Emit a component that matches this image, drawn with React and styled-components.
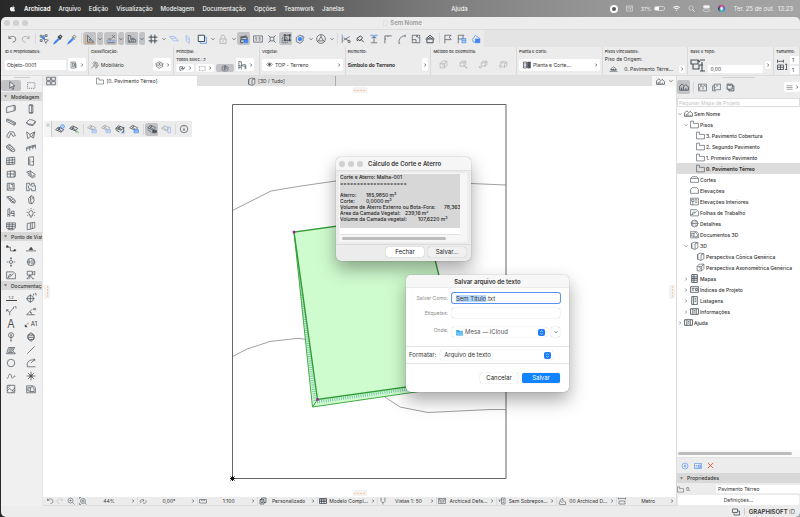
import React, { useEffect, useRef } from 'react';
import styled, { createGlobalStyle } from 'styled-components';
import { FaApple, FaWifi } from 'react-icons/fa';

const GlobalStyle = createGlobalStyle`
    * {
        box-sizing: border-box;
    }
    body {
        margin: 0;
        font-family: Inter, "Liberation Sans", sans-serif;
        font-size: 5px;
        line-height: 6px;
        color: #333;
        overflow: hidden;
    }
    button, input, select, textarea {
        font: inherit;
        color: inherit;
        margin: 0;
        padding: 0;
        border: 0;
        outline: none;
        background: none;
    }
    ul {
        list-style: none;
        margin: 0;
        padding: 0;
    }
`;

const BLUE = '#3f84f0';

const icons = {
    undo: <path d="M3 3v4h4M3 7c2-4 10-5 11 1 0 3-2 5-5 5" />,
    redo: <path d="M13 3v4H9M13 7C11 3 3 2 2 8c0 3 2 5 5 5" />,
    pick: <><path d="M2 2h3v3H2zM10 1h3v3h-3zM2 9h3v3H2z" /><path d="M4 4l5 5M6 3h4" /><circle cx="7" cy="6" r="2" fill={ BLUE } stroke={ BLUE } /><path d="M8 8l7 2-3 2-1 3z" fill="#fff" /></>,
    dropper: <><path d="M9 4l3 3 2-3-2-2zM8 5l4 4" strokeWidth="2" /><path d="M9 7l-6 6-1 2 2-1 6-6" stroke={ BLUE } strokeWidth="2" /></>,
    syringe: <><path d="M9 4l3 3 2-3-2-2zM8 5l4 4" /><path d="M9 7l-6 6-1 2 2-1 6-6" stroke={ BLUE } strokeWidth="2" /></>,
    triangle: <><path d="M4 2v11h10zM7 8v2h2z" /><path d="M1 1v14h14" stroke="#e08a4a" /></>,
    snap: <><path d="M1 11h14" stroke={ BLUE } strokeDasharray="3 1" /><path d="M3 8h6M10 6l4-4M10 2l4 4M2 14h12" /></>,
    ruler: <path d="M2 2v11h12V9H6V3zM4 10v3M7 10v3M10 10v3M7 7h5" />,
    grid: <path d="M5 1v14M11 1v14M1 5h14M1 11h14" strokeWidth="1.6" />,
    plane: <path d="M1 4h8l6 7H7zM4 7h8" stroke="#8fb3ee" />,
    planeV: <path d="M5 2l5 4v9l-5-4zM5 6l5 4" stroke="#8fb3ee" />,
    frame: <><path d="M5 5h10v10H5z" stroke={ BLUE } /><path d="M2 2h10v10H2z" fill="#eef3fb" strokeWidth="1.6" /></>,
    lock: <path d="M3 8h10v7H3zM5 8V4c0-3 6-3 6 0v4M8 10v3" stroke="#a5a5a5" />,
    trace: <><path d="M2 13l2-8 8-2M2 5h11v4H4M2 14h5" strokeWidth="1.6" /><path d="M8 9h6v5H8z" fill={ BLUE } stroke={ BLUE } /></>,
    dims: <path d="M1 3h14v10H1zM5 5v6M4 6h1M11 5v6M10 6h1M8 6v1M8 9v1" />,
    cross: <path d="M5 5h6v6H5zM2 2l3 3M14 2l-3 3M2 14l3-3M14 14l-3-3" />,
    group: <><path d="M2 6h8v8H2z" strokeDasharray="2 1" /><path d="M6 2h8v8H6zM5 1h2v2H5zM13 1h2v2h-2zM13 9h2v2h-2zM5 9h2v2H5z" strokeWidth="1.5" /></>,
    cube: <><path d="M2 6l5-4 6 2v7l-5 4-6-3z" /><circle cx="8" cy="8" r="3" fill={ BLUE } stroke={ BLUE } /><path d="M11 2l4 4" stroke={ BLUE } /></>,
    orbit: <><circle cx="8" cy="8" r="7" /><path d="M8 4l4 7H4zM8 1v3M2 12l2-1M14 12l-2-1" /></>,
    trim: <><path d="M2 6v8M14 4L4 10M4 6l10 6" /><path d="M2 1v5" stroke={ BLUE } /><circle cx="13" cy="12" r="2" /></>,
    wand: <path d="M3 7l6-4 3 3-4 5zM9 8l5 5M2 9l3 2" strokeWidth="1.6" />,
    adjust: <><path d="M2 2h12M4 5h8" stroke={ BLUE } /><path d="M8 4v9M5 7l3-3 3 3M3 14h10" /></>,
    corner: <path d="M3 15V3h11M3 8h2M8 3v2" />,
    fillet: <path d="M3 15C3 8 6 3 13 3M3 15h2M13 1v4" />,
    resize: <path d="M2 2h12v12H2zM2 9h6v5M9 3l4 4M9 5v-2h2" />,
    house: <path d="M1 8l7-6 7 6M3 8h10v6H3zM5 8l3-3 3 3" strokeWidth="1.6" />,
    flag: <path d="M3 15V2h10l-3 3 3 4H3" />,
    flagBlue: <><path d="M2 15V2h9L9 5l2 3H2" /><path d="M8 7h6v7H8zM8 10h6" stroke={ BLUE } fill="#bcd3fa" /></>,
    cloud: <><path d="M2 9l5-7 7 5-1 6H4z" stroke={ BLUE } /><path d="M7 8h7v6H7z" fill={ BLUE } stroke={ BLUE } /></>,
    props: <path d="M2 2h9v12H2zM5 4h3v7H5zM12 5v9M9 5v6" />,
    sofa: <path d="M8 14a6 6 0 1 0-5-9M6 10V6l4-2v4l2 1v2M1 14l5-4h5" />,
    layers: <path d="M1 7l7-4 7 4-7 4zM3 9l-1 2 6 4 6-4-1-2M8 5v4M6 7h4" />,
    plans: <path d="M2 4v8h4M2 4h7l-3 4h5l2-4M8 12l5-6M5 7l3 3" strokeWidth="1.5" />,
    marquee: <path d="M1 3h13v10H1z" strokeDasharray="2 1.5" />,
    chairBig: <path d="M3 15V2l4 1v6l6 1v5M3 9l4 1v5M7 9l4-2 3 1v6M3 12h3" />,
    compass: <path d="M2 6c3-3 9-3 12 0M2 12c3 3 9 3 12 0M2 6v6M14 6v6M8 3l3 6-5 3zM5 8h6" />,
    eye: <><path d="M1 8c3-5 11-5 14 0-3 5-11 5-14 0z" /><circle cx="8" cy="8" r="2.5" fill="#333" /></>,
    box: <path d="M2 6l4-4h8v8l-4 4H2zM2 6h8v8M10 6l4-4M5 8c3-1 4 1 2 4" />,
    boxPt: <path d="M2 5l3-3h7v6l-3 3H2zM2 5h7v6M9 5l3-3M9 11l5 3M13 12v2h2" />,
    boxSq: <path d="M4 5l3-3h7v6l-3 3H4zM4 5h7v6M11 5l3-3M1 11v3h3M1 14l3-3" />,
    boxRot: <path d="M3 4l4-2 7 2v6l-4 3-7-2zM3 4l7 2v7M10 6l4-2M1 9v3l3 3" />,
    section: <><path d="M1 2h6v12H1zM3 5h2M3 8h2M3 11h2" strokeWidth="1.5" /><path d="M9 2h6v12H9z" fill="#4a5560" /></>,
    floorLine: <path d="M1 13h14M4 11V8l4-3 4 3v3zM8 8v3M2 10h12" />,
    heights: <path d="M1 3h7v4H1zM3 7v5h6V8h4M10 3h5M12 5v9M10 14h5M8 3l2 2" />,
    size: <path d="M2 3h8M2 1v4M10 1v4M2 8h8v6H2zM6 8v6M12 7h3M12 14h3M14 7v7M2 11h8" />,
    cursor: <path d="M5 1v12l3-3 2 5 2-1-2-5h4z" fill="#f4f4f4" strokeWidth="1.4" />,
    wall: <path d="M1 5l12-3v9L1 14zM13 2l2 1v7l-2 1" />,
    column: <path d="M5 2h6v12H5zM5 2c1-1 5-1 6 0M5 14c1 1 5 1 6 0M9 3v11" />,
    beam: <path d="M1 4l2-1 12 6v3l-2 1L1 7zM1 4l12 6 2-1M13 10v3" />,
    slab: <path d="M1 8l5-4 5 1 4 2-4 5-8-1zM1 8v2l2 2 8 2 4-5V7" />,
    roof: <path d="M1 10l4-7 7 0 3 6-4 1-3-5-4 8z" />,
    shell: <path d="M1 3l5 4 8-4-2 10-5-3-4 4zM6 7l1 3M14 3l-5 8" />,
    stair: <path d="M1 5l4-3 9 8v3l-4 1-9-6zM3 6l4-3M5 8l4-3M7 10l4-3M9 12l4-3M1 5l9 8" />,
    railing: <path d="M1 13V7l14-4v6M6 12V6M11 10V4M1 9l14-4" />,
    curtain: <path d="M1 3l13-1v11L1 14zM5 3v11M10 2v11M1 7l13-1M1 11l13-1" />,
    door: <path d="M4 2l8-1v14l-8-1zM6 4v9M10 8v2" />,
    windowT: <path d="M2 4l11-1v10L2 13zM7 3v10M2 8h11M13 3l2 1v8l-2 1" />,
    skylight: <path d="M1 5l6-2 8 6-5 3zM4 5l6 5M3 9l7 5 5-2M7 3l1 4" />,
    opening: <path d="M2 2h11v11H2zM5 2v8h8M2 13l3-3M8 4h3v4" />,
    zone: <path d="M1 2h5v3h3V2h4v4h2v8H9v-3H5v3H1zM4 6v4M9 7h3" />,
    mesh: <path d="M1 3l6-1 8 7-1 4-5-1zM3 3l9 9M5 6l4-2M7 9l5-3M10 11l4-2" />,
    morph: <path d="M4 6l4-5 4 2 1 6-3 5-5-1zM8 1l-1 7 2 6M12 3l-3 4" />,
    chair: <path d="M3 14V2l3-1v7l7 1v5M6 8v6M3 10l3 1M9 9V5h4v4M9 12h4" />,
    lamp: <path d="M8 4a4 4 0 0 1 2 7v2H6v-2a4 4 0 0 1 2-7zM8 0v2M1 7h2M13 7h2M3 2l1 1M13 2l-1 1M2 12l2-1M14 12l-2-1M7 15h2" />,
    bimx: <path d="M1 3h14v8l-3 3H4l-3-3zM1 6h14M1 9h14M5 3v10M10 3v10M3 12h9" />,
    panelT: <path d="M2 4l5-1v10l-5 1zM7 3l7-1v9l-7 2M10 3v9" />,
    sectionL: <><path d="M2 5h5v6h7" /><path d="M0 5l2-3 2 3zM12 11l2-3 2 3z" fill="#333" /></>,
    elevation: <><path d="M0 11h16" /><path d="M5 9l3-4 3 4z" fill="#333" /></>,
    interior: <><circle cx="8" cy="8" r="2.5" /><path d="M8 1v3M8 12v3M1 8h3M12 8h3M7 3l1-2 1 2M7 13l1 2 1-2" /></>,
    detail: <><circle cx="8" cy="8" r="6" /><path d="M5 4v8M2 8h13M8 5h5M8 11h5" /></>,
    sheet: <path d="M1 3h11l3 3v8H1zM3 12l3-5 3 1-3 3zM9 8l3-2" />,
    camera: <path d="M2 2h8v6H2zM10 4l4-2v6l-4-2M6 8l-4 6M6 8l5 6M6 8v6M1 14h3M10 14h3" />,
    circle: <circle cx="8" cy="8" r="6" />,
    level: <><circle cx="7" cy="9" r="5" /><path d="M7 2v14M0 9h14M12 1v3M14 1h2v3" /></>,
    radial: <path d="M1 6l5 4v5M6 10l5-6h1M1 6v3M1 6h3M12 1v3M14 1h2v3" />,
    angle: <path d="M1 14h13M1 14l9-9M6 9l4 5M7 9l2 2M16 3c-2 4-4 4-4 2s2-2 4 2" />,
    label: <><path d="M2 14l5-8h4" /><path d="M0 10v6h6z" fill="#333" /></>,
    gridEl: <><circle cx="8" cy="5" r="4" /><path d="M8 3v12M7 5h2M8 13v2" /></>,
    change: <><circle cx="8" cy="8" r="5" /><path d="M3 5l5-4 5 4v6l-5 4-5-4zM5 6h6M4 9h8M7 12h3" /></>,
    hatch: <path d="M1 14l3-10h10l-3 5 4 5zM3 12h9M4 10h6M4 8h7M5 6h7" />,
    line: <path d="M2 14L14 2" />,
    arc: <path d="M15 14H2V9c1-4 4-6 9-6M8 8l6-6M14 5V2h-3" />,
    spline: <path d="M1 11c3 4 3-8 6-6s1 8 4 6 2-5 4-2" />,
    hotspot: <><path d="M8 1v14M1 8h14M3 3l10 10M13 3L3 13" /><circle cx="8" cy="8" r="2" /></>,
    figure: <path d="M2 2h12v12H2zM2 11l4-4 4 4 4-5M2 7l5-5M9 14l5-4" />,
    drawing: <path d="M1 3h11l3 3v8H1zM3 6h4v5H3zM6 7l4-3 3 4v4H6" />,
    folder: <path d="M1 14V2h5v4h9v8z" />,
    cubeTab: <path d="M3 4l5-2 6 1v9l-5 3-6-2zM3 4v9M9 5v9M9 5l5-2" />,
    tiles: <path d="M1 2h6v5H1zM9 2h6v5H9zM1 9h6v5H1zM9 9h6v5H9z" />,
    homes: <path d="M1 13V7l4-4 3 3M1 13h14V8l-4-4-4 4v5M4 13V9M11 13v-3" strokeWidth="1.3" />,
    viewMap: <path d="M1 2h14v12H1zM3 12V8l3-3 3 3v4M9 6l3-2 2 3M4 4h3" />,
    layout: <path d="M1 14V5h3M4 2h11v10H4zM4 9l3-2M7 5h4M1 14h6" />,
    publish: <path d="M2 2h9v9H2zM5 11v3h9V5h-3M4 4h5" strokeWidth="1.5" />,
    surf: <><path d="M1 7l5-4 8 3-4 4zM4 5l7 4M9 4L4 8M1 9l6 4M11 13h3V5" strokeWidth="1.4" /><path d="M10 14h5" stroke={ BLUE } /></>,
    surfDot: <><path d="M1 9l5-4 8 4-4 4zM4 6l7 6M8 6l-4 5" strokeWidth="1.4" /><circle cx="12" cy="4" r="3" stroke={ BLUE } fill="#bcd3fa" /></>,
    surfGreen: <><path d="M1 7l5-4 8 4-4 4zM4 5l7 5M8 4L4 9" strokeWidth="1.4" /><path d="M11 13c1-2 3-2 4 0M11 11v2h2M15 15v-2" stroke="#43b05c" /></>,
    surfBlue: <><path d="M1 6l5-4 8 4-4 4zM4 4l7 5M8 3L4 8" /><path d="M8 9h7v5H8zM8 11h7" stroke={ BLUE } fill="#bcd3fa" /></>,
    surfLock: <><path d="M1 6l5-4 8 4-4 4zM4 4l7 5M8 3L4 8M1 9l6 4" /><path d="M9 10h6v4H9z" fill="#4a545c" /></>,
    surfBox: <><path d="M1 7l5-4 6 3-3 5zM4 5l5 5" stroke="#999" /><path d="M11 5h4v9h-4z" stroke="#8fb3ee" /></>,
    info: <><circle cx="8" cy="8" r="6" /><path d="M8 7v4M8 4v1" strokeWidth="1.6" /></>,
    zoom: <><circle cx="7" cy="7" r="5" /><path d="M11 11l4 4M5 7h4M7 5v4" /></>,
    fit: <><circle cx="8" cy="8" r="5" /><path d="M12 12l3 3M1 4V1h3M8 5v6M5 8h6M1 12v3h3" /></>,
    rotate: <path d="M2 10a4 4 0 0 1 6-4l2 1M14 7a4 4 0 0 1-6 5M8 4l2 3-3 2M5 10l-3 1" />,
    scale: <path d="M1 5h14v7H1zM5 5v3M8 5v3M11 5v3" />,
    stack: <path d="M2 5h8v9H2zM5 5V2h9v9h-4M2 8h8M4 11h4" strokeWidth="1.5" />,
    model: <path d="M1 3h14v10H1zM1 6h14M1 9h14M5 3v10M10 3v10" strokeWidth="1.6" />,
    pen: <path d="M4 1v7c0 4 8 4 8 0V1M8 11v4M5 5h1M10 5h1" />,
    dimBox: <path d="M1 3h14v10H1zM4 6h8v4H4zM1 3l3 3M15 3l-3 3" />,
    rollers: <path d="M1 6h6M7 2h7v12H7zM3 6v4M9 5h3M9 8h3M9 11h3" />,
    reno: <path d="M2 14l3-8 4-4 1 6 5 2v5H6zM5 8l4 4" />,
    unit: <path d="M1 3h14M1 1v4M15 1v4M2 8h12v6H2z" />,
    cut: <path d="M1 6l3-3h8l3 3v7H1zM1 6h14" />,
    elev: <path d="M1 6l3-3h8l3 3v7H1z" />,
    table: <path d="M1 2h14v12H1zM3 4h4v4H3zM9 4h4M9 7h4M9 10h4M5 8v6" />,
    maps: <path d="M3 1h10v14H3zM3 5h10M3 8h10M3 11h10M7 1v14" strokeWidth="1.5" />,
    index: <path d="M1 3h14v10H1zM3 6h5M3 9h4M10 6h3v4h-3z" strokeWidth="1.4" />,
    list: <path d="M3 1h10v14H3zM6 1v14M8 4h3M8 7h3M8 10h3" strokeWidth="1.4" />,
    report: <path d="M1 3h14v10H1zM5 3v10M11 3v10M7 6h2M7 9h2" strokeWidth="1.5" />,
    plus: <><circle cx="8" cy="8" r="6" /><path d="M8 5v6M5 8h6" /></>,
    card: <><path d="M1 3h14v10H1zM3 7h4M3 10h4" /><path d="M9 6h4v5H9z" fill="#bcd3fa" /></>,
    close: <path d="M2 2l12 12M14 2L2 14" strokeWidth="2" />,
    windows: <path d="M1 2h10v7H1zM4 11v3h11V6h-3" strokeWidth="1.6" />,
    menu: <path d="M1 4h14M1 8h14M1 12h14" />,
    right: <path d="M5 2l6 6-6 6" strokeWidth="3" />,
    down: <path d="M2 5l6 6 6-6" strokeWidth="3" />,
    updown: <path d="M4 6l4-4 4 4M4 10l4 4 4-4" strokeWidth="2" />,
    fold: <path d="M3 4h10l-5 7z" fill="#777" stroke="none" />,
    calendar: <path d="M1 2h14v12H1zM1 5h14M4 8h2M8 8h4M4 11h2M8 11h4" />,
    search: <><circle cx="7" cy="7" r="5" /><path d="M11 11l4 4" strokeWidth="2" /></>,
    control: <><rect x="1" y="1" width="14" height="6" rx="3" fill="#f2f2f2" /><rect x="1" y="9" width="14" height="6" rx="3" /></>,
    macFolder: <><path d="M1 3h6l1 2h7v9H1z" fill="#3ba4dd" stroke="#3ba4dd" /><path d="M1 7h14v7H1z" fill="#68c3f2" stroke="none" /></>,
    doc: <path d="M4 1h6l3 3v11H4z" stroke="#d8cfc9" />,
};

const Icon = ({ name, size = 11, color }) => (
    <Svg $size={ size } $color={ color } viewBox="0 0 16 16" aria-hidden="true">{ icons[name] }</Svg>
);

const menus = ['Arquivo', 'Edição', 'Visualização', 'Modelagem', 'Documentação', 'Opções', 'Teamwork', 'Janelas'];

// 'v' is a drop-down arrow, '|' a separator, '*' marks a pressed button
const toolbar = [
    'undo', 'redo-', '|', 'pick', 'dropper', 'syringe', '|', 'triangle*', 'v*', 'snap*', 'v*', 'ruler*', 'v*',
    'grid', 'v', 'plane', 'planeV', 'frame', 'v', 'lock', 'v', 'trace*', 'dims', 'cross', 'group*', 'cube', 'v',
    'orbit', 'v', '|', 'trim', 'wand', 'adjust', 'corner', 'fillet', 'resize', 'house', '|', 'flag', 'flagBlue', 'cloud',
];

const palette = [
    'surfDot', 'surfGreen', '|', 'surfBlue-', 'surfBlue-', 'surf', 'surfBlue', '|', 'surfLock*', 'surfBox', '|', 'info',
];

const toolGroups = [
    ['Modelagem', ['wall', 'column', 'beam', 'slab', 'roof', 'shell', 'stair', 'railing', 'curtain', 'door', 'windowT', 'skylight', 'opening', 'zone', 'mesh', 'morph', 'chair', 'lamp', 'bimx', 'panelT']],
    ['Ponto de Vista', ['sectionL', 'elevation', 'interior', 'detail', 'sheet', 'camera']],
    ['Documentação', ['dimension', 'level', 'radial', 'angle', 'text', 'label', 'gridEl', 'change', 'hatch', 'line', 'circle', 'arc', 'spline', 'hotspot', 'figure', 'drawing']],
];

const tree = [
    [0, 'down', 'homes', 'Sem Nome'],
    [1, 'down', 'folder', 'Pisos'],
    [2, '', 'folder', '3. Pavimento Cobertura'],
    [2, '', 'folder', '2. Segundo Pavimento'],
    [2, '', 'folder', '1. Primeiro Pavimento'],
    [2, '', 'folder', '0. Pavimento Térreo', true],
    [1, '', 'cut', 'Cortes'],
    [1, '', 'elev', 'Elevações'],
    [1, '', 'table', 'Elevações Interiores'],
    [1, '', 'sheet', 'Folhas de Trabalho'],
    [1, '', 'detail', 'Detalhes'],
    [1, '', 'drawing', 'Documentos 3D'],
    [1, 'down', 'cubeTab', '3D'],
    [2, '', 'cubeTab', 'Perspectiva Cônica Genérica'],
    [2, '', 'box', 'Perspectiva Axonométrica Genérica'],
    [1, 'right', 'maps', 'Mapas'],
    [1, 'right', 'index', 'Índices de Projeto'],
    [1, 'right', 'list', 'Listagens'],
    [1, 'right', 'report', 'Informações'],
    [0, 'right', 'report', 'Ajuda'],
];

const statusItems = [
    ['fit', '44%'],
    ['rotate', '0,00°'],
    ['scale', '1:100'],
    ['stack', 'Personalizado'],
    ['model', 'Modelo Compl...'],
    ['pen', 'Vistas 1: 50'],
    ['dimBox', 'Archicad Defa...'],
    ['rollers', 'Sem Sobrepos...'],
    ['reno', '00 Archicad D...'],
    ['unit', 'Metro'],
];

const report = [
    'Corte e Aterro: Malha-001',
    '====================',
    '',
    'Aterro:\t185,9850 m³',
    'Corte:\t0,0000 m³',
    'Volume de Aterro Externo ou Bota-Fora:\t78,3630 m³',
    'Área da Camada Vegetal:\t239,16 m²',
    'Volume da Camada vegetal:\t107,6220 m³',
].join('\n');

const ToolRow = ({ items }) => items.map((item, i) => {
    if (item === '|') return <Separator key={ i } />;
    const name = item.replace(/[*-]/, '');
    const arrow = name === 'v';
    return (
        <ToolButton key={ i } type="button" aria-label={ name } $narrow={ arrow } $on={ item.endsWith('*') } $dim={ item.endsWith('-') }>
            <Icon name={ arrow ? 'down' : name } size={ arrow ? 4 : 10 } />
        </ToolButton>
    );
});

const MenuBar = () => (
    <Menu>
        <FaApple size={ 7 } />
        <MenuItem $bold>Archicad</MenuItem>
        { menus.map((m) => <MenuItem key={ m }>{ m }</MenuItem>) }
        <Notch />
        <MenuItem>Ajuda</MenuItem>
        <Tray>
            <Record />
            <Icon name="calendar" size={ 7 } color="#f2f2f2" />
            <Charge>37% <Battery /></Charge>
            <FaWifi size={ 7 } />
            <Icon name="search" size={ 7 } color="#f2f2f2" />
            <Icon name="control" size={ 7 } color="#f2f2f2" />
            <Siri />
            <span>Ter. 25 de out.&nbsp; 13:23</span>
        </Tray>
    </Menu>
);

const InfoBar = () => (
    <Info>
        <InfoCell>
            <Caption as="label" htmlFor="objId">ID e Propriedades:</Caption>
            <InfoRow>
                <Field id="objId" defaultValue="Objeto-0001" />
                <WhiteButton type="button" aria-label="Propriedades"><Icon name="props" size={ 8 } /><Icon name="right" size={ 4 } /></WhiteButton>
            </InfoRow>
        </InfoCell>
        <InfoCell>
            <Caption>Classificação:</Caption>
            <InfoRow>
                <Icon name="sofa" size={ 8 } />
                <Grow>Mobiliário</Grow>
                <WhiteButton type="button" aria-label="Camada"><Icon name="layers" size={ 9 } /><Icon name="right" size={ 4 } /></WhiteButton>
            </InfoRow>
        </InfoCell>
        <InfoCell>
            <Caption>Principal:</Caption>
            <InfoRow>
                <Stack>
                    <Caption>Todos Selec.: 2</Caption>
                    <MiniRow>
                        <MiniButton type="button" aria-label="Planta"><Icon name="plans" size={ 7 } /><Icon name="right" size={ 4 } /></MiniButton>
                        <MiniButton type="button" aria-label="Seleção"><Icon name="marquee" size={ 7 } /><Icon name="right" size={ 4 } /></MiniButton>
                        <MiniButton type="button" aria-label="Âncora" $on><Icon name="compass" size={ 8 } /></MiniButton>
                    </MiniRow>
                </Stack>
                <WhiteButton type="button" aria-label="Objeto"><Icon name="chairBig" size={ 10 } /><Icon name="right" size={ 4 } /></WhiteButton>
            </InfoRow>
        </InfoCell>
        <InfoCell>
            <Caption as="label" htmlFor="layer">Vegetal:</Caption>
            <InfoRow>
                <SelectBox>
                    <Icon name="eye" size={ 7 } />
                    <Select id="layer"><option>TOP - Terreno</option></Select>
                    <Icon name="right" size={ 4 } />
                </SelectBox>
            </InfoRow>
        </InfoCell>
        <InfoCell>
            <Caption>Elemento:</Caption>
            <InfoRow>
                <Grow $bold>Símbolo do Terreno</Grow>
                <WhiteButton type="button" aria-label="Escolher" $slim><Icon name="right" size={ 4 } /></WhiteButton>
            </InfoRow>
        </InfoCell>
        <InfoCell>
            <Caption>Método de Geometria:</Caption>
            <InfoRow $spread>
                { ['box', 'boxPt', 'boxSq', 'boxRot'].map((n) => <Icon key={ n } name={ n } size={ 9 } color="#aaa" />) }
            </InfoRow>
        </InfoCell>
        <InfoCell>
            <Caption as="label" htmlFor="plan">Planta e Corte:</Caption>
            <InfoRow>
                <SelectBox>
                    <Icon name="section" size={ 8 } />
                    <Select id="plan"><option>Planta e Corte...</option></Select>
                    <Icon name="right" size={ 4 } />
                </SelectBox>
            </InfoRow>
        </InfoCell>
        <InfoCell>
            <Caption>Pisos Vinculados:</Caption>
            <Linked>
                <span>Piso de Origem:</span>
                <LinkedRow>
                    <Icon name="floorLine" size={ 9 } />
                    <span>0. Pavimento Térre...</span>
                    <MiniButton type="button" aria-label="Piso" $slim><Icon name="right" size={ 4 } /></MiniButton>
                </LinkedRow>
            </Linked>
        </InfoCell>
        <InfoCell>
            <Caption as="label" htmlFor="base">Base e Topo:</Caption>
            <InfoRow>
                <Icon name="heights" size={ 16 } />
                <LowField id="base" defaultValue="0,00" />
                <MiniButton type="button" aria-label="Base" $slim><Icon name="right" size={ 4 } /></MiniButton>
            </InfoRow>
        </InfoCell>
        <InfoCell>
            <Caption>Tamanho:</Caption>
            <InfoRow>
                <Icon name="size" size={ 12 } />
                <Stack>
                    <SizeField aria-label="Largura" defaultValue="1" />
                    <SizeField aria-label="Altura" defaultValue="1" />
                </Stack>
            </InfoRow>
        </InfoCell>
    </Info>
);

const ToolIcon = ({ name }) => {
    if (name === 'text') return <Letter>A</Letter>;
    if (name === 'label') return <><Icon name="label" size={ 6 } /><small>A1</small></>;
    if (name === 'dimension') return <DimMark>1.2</DimMark>;
    return <Icon name={ name } size={ 10 } />;
};

const Toolbox = () => (
    <Tools>
        <Grip $width={ 16 } />
        <ToolGrid $gap>
            <Tool type="button" aria-label="Seta" $on><Icon name="cursor" size={ 9 } /></Tool>
            <Tool type="button" aria-label="Área"><Icon name="marquee" size={ 9 } /></Tool>
        </ToolGrid>
        { toolGroups.map(([title, tools]) => (
            <section key={ title }>
                <GroupTitle><Icon name="fold" size={ 5 } />{ title }</GroupTitle>
                <ToolGrid>
                    { tools.map((t) => <Tool key={ t } type="button" aria-label={ t }><ToolIcon name={ t } /></Tool>) }
                </ToolGrid>
            </section>
        )) }
    </Tools>
);

const SitePlan = () => (
    <Plan viewBox="43 86 633 411">
        <g fill="none" stroke="#888" strokeWidth="0.8">
            <path d="M232.5 210.5L271 191l30-5 35-5M471 183.500l35 1.500" />
            <path d="M232.500 356.500L247 349l23-7.500 28-3.200 8 1" />
            <path d="M382 395l18 12 28 5.500 62-3h16" />
        </g>
        <path d="M232.500 104.500h273.500v374h-273.500z" fill="none" stroke="#666" strokeWidth="1" />
        <path d="M294 232l18.500 175 110-16 40-5-38-172z" fill="#cffccf" />
        <g stroke="#59aaa0" strokeDasharray="0.800 1.400" fill="none" opacity="0.8">
            <path d="M296.500 250l5 45" strokeWidth="1.500" />
            <path d="M302 295l13 107" strokeWidth="3" />
            <path d="M317 402l92-13" strokeWidth="3" />
        </g>
        <path d="M294 232l18.500 175 110-16" fill="none" stroke="#43a843" strokeWidth="1" />
        <path d="M312.500 407l5-7.500" stroke="#43a843" strokeWidth="1" />
        <path d="M317.500 399.500L294 232l130-18 40 165z" fill="none" stroke="#2f9c35" strokeWidth="1.400" />
        <path d="M293 231h2v2h-2zM316.500 398.500h2v2h-2z" fill="#a3179b" stroke="#a3179b" strokeWidth="0.500" />
        <path d="M230.500 476.500l4 4M234.500 476.500l-4 4M230 478.500h5M232.500 476v5" stroke="#111" strokeWidth="1" />
    </Plan>
);

const Navigator = () => (
    <Panel>
        <PanelTop>
            <Grip $width={ 32 } />
            <PanelTools>
                <NavButton type="button" aria-label="Mapa de Projeto" $on><Icon name="homes" size={ 10 } /></NavButton>
                <Separator />
                <NavButton type="button" aria-label="Mapa de Vistas"><Icon name="viewMap" size={ 9 } /></NavButton>
                <NavButton type="button" aria-label="Livro de Layouts"><Icon name="layout" size={ 9 } /></NavButton>
                <NavButton type="button" aria-label="Publicador"><Icon name="publish" size={ 9 } /></NavButton>
                <PanelMenu type="button" aria-label="Opções"><Icon name="menu" size={ 7 } /><Icon name="right" size={ 4 } /></PanelMenu>
            </PanelTools>
        </PanelTop>
        <SearchField aria-label="Pesquisar" placeholder="Pequisar Mapa de Projeto" />
        <Tree>
            { tree.map(([depth, arrow, icon, name, active]) => (
                <TreeRow key={ name } $depth={ depth } $active={ active }>
                    <Arrow>{ arrow && <Icon name={ arrow } size={ 4 } color="#777" /> }</Arrow>
                    <Icon name={ icon } size={ 9 } />
                    { name }
                </TreeRow>
            )) }
        </Tree>
        <Track><Thumb /></Track>
        <Actions>
            <NavButton type="button" aria-label="Novo"><Icon name="plus" size={ 8 } color={ BLUE } /></NavButton>
            <NavButton type="button" aria-label="Configurar"><Icon name="card" size={ 8 } color={ BLUE } /></NavButton>
            <NavButton type="button" aria-label="Apagar"><Icon name="close" size={ 7 } color="#e8492c" /></NavButton>
        </Actions>
        <PropTitle><Icon name="fold" size={ 5 } />Propriedades</PropTitle>
        <PropRow>
            <Icon name="folder" size={ 7 } />
            <PropLabel htmlFor="floor">0.</PropLabel>
            <PropField id="floor" defaultValue="Pavimento Térreo" />
        </PropRow>
        <Settings type="button">Definições...</Settings>
    </Panel>
);

const ReportDialog = () => (
    <ReportWindow role="dialog" aria-label="Cálculo de Corte e Aterro">
        <DialogTitle>
            <Lights><i /><i /><i /></Lights>
            <span>Cálculo de Corte e Aterro</span>
        </DialogTitle>
        <ReportBox>
            <ReportText aria-label="Relatório" readOnly wrap="off" defaultValue={ report } />
            <ReportTrack><Thumb /></ReportTrack>
        </ReportBox>
        <ReportActions>
            <DialogButton type="button">Fechar</DialogButton>
            <DialogButton type="button" $soft>Salvar...</DialogButton>
        </ReportActions>
    </ReportWindow>
);

const SaveDialog = () => {
    const nameRef = useRef(null);

    useEffect(() => {
        nameRef.current.focus({ preventScroll: true });
        nameRef.current.setSelectionRange(0, 10);
    }, []);

    return (
        <SaveWindow role="dialog" aria-label="Salvar arquivo de texto">
            <SaveTitle>Salvar arquivo de texto</SaveTitle>
            <SaveForm>
                <SaveLabel htmlFor="fileName">Salvar Como:</SaveLabel>
                <NameField id="fileName" ref={ nameRef } defaultValue="Sem Título.txt" />
                <SaveLabel htmlFor="tags">Etiquetas:</SaveLabel>
                <DialogField id="tags" />
                <SaveLabel htmlFor="where">Onde:</SaveLabel>
                <WhereRow>
                    <DialogSelect>
                        <Icon name="macFolder" size={ 7 } />
                        <Select id="where" $size={ 6 } $muted><option>Mesa — iCloud</option></Select>
                        <Stepper><Icon name="updown" size={ 5 } color="#fff" /></Stepper>
                    </DialogSelect>
                    <Expand type="button" aria-label="Expandir"><Icon name="down" size={ 4 } /></Expand>
                </WhereRow>
            </SaveForm>
            <FormatRow>
                <label htmlFor="format">Formatar:</label>
                <DialogSelect>
                    <Select id="format" $size={ 6 }><option>Arquivo de texto</option></Select>
                    <Stepper><Icon name="updown" size={ 5 } color="#fff" /></Stepper>
                </DialogSelect>
            </FormatRow>
            <SaveActions>
                <DialogButton type="button">Cancelar</DialogButton>
                <DialogButton type="submit" $primary>Salvar</DialogButton>
            </SaveActions>
        </SaveWindow>
    );
};

const App = () => (
    <Desktop>
        <GlobalStyle />
        <MenuBar />
        <Window>
            <TitleBar>
                <Lights><i /><i /><i /></Lights>
                <TitleText><Icon name="doc" size={ 6 } />Sem Nome</TitleText>
            </TitleBar>
            <Toolbar><ToolStrip><ToolRow items={ toolbar } /></ToolStrip></Toolbar>
            <InfoBar />
            <Body>
                <Toolbox />
                <Center>
                    <Tabs>
                        <TabTiles type="button" aria-label="Abas"><Icon name="tiles" size={ 10 } /></TabTiles>
                        <Tab type="button" $active><Icon name="folder" size={ 8 } />[0. Pavimento Térreo]</Tab>
                        <Tab type="button"><Icon name="cubeTab" size={ 9 } />[3D / Tudo]</Tab>
                        <TabView type="button" aria-label="Vista"><Icon name="homes" size={ 9 } /><Icon name="down" size={ 4 } /></TabView>
                    </Tabs>
                    <Canvas>
                        <SitePlan />
                        <Palette>
                            <PaletteGrip><i /></PaletteGrip>
                            <ToolRow items={ palette } />
                        </Palette>
                        <Handle $side="top" />
                        <Handle $side="bottom" />
                        <Handle $side="left" />
                        <Handle $side="right" />
                    </Canvas>
                    <Status>
                        <Zooms>
                            <Icon name="undo" size={ 8 } />
                            <Icon name="redo" size={ 8 } color="#bbb" />
                            <Icon name="zoom" size={ 8 } />
                        </Zooms>
                        { statusItems.map(([icon, text]) => (
                            <StatusItem key={ text } type="button">
                                <Icon name={ icon } size={ 8 } />
                                <span>{ text }</span>
                                <Icon name="right" size={ 4 } />
                            </StatusItem>
                        )) }
                    </Status>
                </Center>
                <Navigator />
            </Body>
            <Footer>
                <Icon name="windows" size={ 8 } />
                <FooterLine />
                <Brand>GRAPHISOFT <b>ID</b></Brand>
            </Footer>
        </Window>
        <ReportDialog />
        <SaveDialog />
    </Desktop>
);

export default App;


const Svg = styled.svg`
    flex: none;
    display: block;
    width: ${({ $size }) => $size}px;
    height: ${({ $size }) => $size}px;
    fill: none;
    stroke: ${({ $color }) => $color || "#444e57"};
    stroke-width: 1.1;
    overflow: visible;
`;
const Desktop = styled.div`
    position: relative;
    min-height: 100vh;
    display: flex;
    flex-direction: column;
    background: linear-gradient(90deg, #292929 0%, #4b4b4b 30%, #7d7d7d 55%, #969696 75%, #a4a4a4 100%);
`;
const Menu = styled.header`
    height: 17px;
    display: flex;
    align-items: center;
    gap: 8px;
    padding: 0 7px 0 9px;
    font-size: 6px;
    color: #f2f2f2;
`;
const MenuItem = styled.span`
    font-weight: ${({ $bold }) => $bold ? 700 : 500};
`;
const Notch = styled.span`
    width: 91px;
`;
const Tray = styled.div`
    margin-left: auto;
    display: flex;
    align-items: center;
    gap: 8px;
`;
const Record = styled.span`
    width: 8px;
    height: 8px;
    border-radius: 50%;
    border: 2px solid #fff;
    background: #555;
`;
const Charge = styled.span`
    display: flex;
    align-items: center;
    gap: 3px;
    font-size: 5px;
`;
const Battery = styled.span`
    width: 11px;
    height: 5px;
    border: 1px solid #ccc;
    border-radius: 2px;
    background: linear-gradient(90deg, #fff 40%, transparent 40%);
`;
const Siri = styled.span`
    width: 7px;
    height: 7px;
    border-radius: 50%;
    background: radial-gradient(#fff 10%, transparent 50%), conic-gradient(#e0457b, #2f6fe0, #35c4c0, #3a2a60, #e0457b);
`;
const Window = styled.div`
    flex: 1;
    margin-left: 1px;
    display: flex;
    flex-direction: column;
    background: #ececec;
    border-radius: 5px;
    overflow: hidden;
`;
const Lights = styled.span`
    display: flex;
    gap: 3px;

    i {
        width: 6px;
        height: 6px;
        border-radius: 50%;
        background: #d0d0d0;
    }
`;
const TitleBar = styled.div`
    height: 13px;
    display: grid;
    grid-template-columns: 1fr auto 1fr;
    align-items: center;
    padding-left: 3px;
    border-bottom: 1px solid #dcdcdc;
`;
const TitleText = styled.h1`
    margin: 0;
    display: flex;
    align-items: center;
    gap: 2px;
    font-size: 6px;
    font-weight: 600;
    color: #9a9a9a;
`;
const Toolbar = styled.div`
    height: 17px;
    display: flex;
    background: #e4e4e4;
`;
const ToolStrip = styled.div`
    display: flex;
    align-items: center;
    padding: 0 1px 0 4px;
    background: #ebebeb;
`;
const ToolButton = styled.button`
    flex: none;
    width: ${({ $narrow }) => $narrow ? 7 : 14}px;
    height: 13px;
    display: flex;
    align-items: center;
    justify-content: center;
    border-radius: 2px;
    background: ${({ $on }) => $on ? "#c3c3c6" : "none"};
    background-clip: padding-box;
    border-right: ${({ $on }) => $on ? 1 : 0}px solid transparent;
    opacity: ${({ $dim }) => $dim ? 0.5 : 1};
`;
const Separator = styled.span`
    flex: none;
    width: 4px;
    height: 11px;
    border-left: 1px solid #d8d8d8;
    margin-right: -2px;
    margin-left: 2px;
`;
const Info = styled.div`
    height: 29px;
    display: grid;
    grid-template-columns: repeat(9, minmax(0, 86fr)) minmax(0, 26fr);
    padding-left: 2px;
    border-bottom: 1px solid #dedede;
`;
const InfoCell = styled.div`
    display: flex;
    flex-direction: column;
    padding: 2px 2px 0;
    border-right: 1px solid #d9d9d9;
    overflow: hidden;
`;
const Caption = styled.span`
    font-size: 4px;
    line-height: 5px;
    font-weight: 500;
    white-space: nowrap;
`;
const InfoRow = styled.div`
    flex: 1;
    display: flex;
    align-items: center;
    justify-content: ${({ $spread }) => $spread ? "space-between" : "flex-start"};
    gap: 2px;
    padding: ${({ $spread }) => $spread ? "0 6px" : 0};
`;
const Field = styled.input`
    flex: 1;
    min-width: 0;
    height: 10px;
    padding: 0 2px;
    border-radius: 1px;
    background: #fff;
`;
const LowField = styled(Field)`
    height: 8px;
    align-self: flex-end;
    margin-bottom: 2px;
`;
const SizeField = styled.input`
    width: 20px;
    height: 8px;
    padding: 0 2px;
    background: #fff;
`;
const WhiteButton = styled.button`
    flex: none;
    width: ${({ $slim }) => $slim ? 6 : 18}px;
    height: 13px;
    display: flex;
    align-items: center;
    justify-content: center;
    gap: 2px;
    border-radius: 2px;
    background: #fff;
`;
const Grow = styled.span`
    flex: 1;
    font-weight: ${({ $bold }) => $bold ? 700 : 400};
    white-space: nowrap;
`;
const Stack = styled.div`
    display: flex;
    flex-direction: column;
    gap: 2px;
`;
const MiniRow = styled.div`
    display: flex;
    gap: 2px;
`;
const MiniButton = styled.button`
    flex: none;
    width: ${({ $slim }) => $slim ? 6 : 18}px;
    height: 8px;
    display: flex;
    align-items: center;
    justify-content: center;
    gap: 2px;
    border-radius: 2px;
    background: ${({ $on }) => $on ? "#c3c3c6" : "#fff"};
`;
const SelectBox = styled.div`
    flex: 1;
    min-width: 0;
    height: 12px;
    display: flex;
    align-items: center;
    gap: 2px;
    padding: 0 2px 0 4px;
    border-radius: 2px;
    background: #fff;
`;
const Select = styled.select`
    flex: 1;
    min-width: 0;
    appearance: none;
    font-size: ${({ $size }) => $size || 5}px;
    line-height: 8px;
    color: ${({ $muted }) => $muted ? "#555" : "#333"};
`;
const Linked = styled.div`
    flex: 1;
    display: flex;
    flex-direction: column;
    justify-content: space-evenly;
`;
const LinkedRow = styled.div`
    display: flex;
    align-items: center;
    justify-content: space-between;
    padding-left: 4px;
    white-space: nowrap;
`;
const Body = styled.div`
    flex: 1;
    display: grid;
    grid-template-columns: 42px minmax(0, 1fr) 124px;
`;
const Tools = styled.aside`
    background: #f0f0f0;
    border-right: 1px solid #e4e4e4;
    overflow: hidden;
`;
const Grip = styled.div`
    width: ${({ $width }) => $width}px;
    height: 1px;
    margin: 1px auto 2px;
    background: #cfcfcf;
`;
const ToolGrid = styled.div`
    display: grid;
    grid-template-columns: 20px 20px;
    grid-auto-rows: ${({ $gap }) => $gap ? 11 : 13}px;
    margin-bottom: ${({ $gap }) => $gap ? 1 : 0}px;
`;
const Tool = styled.button`
    display: flex;
    align-items: center;
    justify-content: center;
    border-radius: 2px;
    background: ${({ $on }) => $on ? "#c3c3c6" : "none"};

    small {
        font-size: 6px;
    }
`;
const Letter = styled.span`
    font-size: 11px;
    font-weight: 300;
`;
const DimMark = styled.span`
    width: 11px;
    font-size: 4px;
    line-height: 5px;
    border-bottom: 1px solid #444;
`;
const GroupTitle = styled.h2`
    height: 9px;
    margin: 0 0 1px;
    display: flex;
    align-items: center;
    gap: 3px;
    padding-left: 2px;
    font-size: 5px;
    font-weight: 500;
    white-space: nowrap;
    overflow: hidden;
    background: #d8d8d8;
`;
const Center = styled.main`
    display: flex;
    flex-direction: column;
`;
const Tabs = styled.div`
    height: 10px;
    display: flex;
    background: #e0e0e0;
`;
const TabTiles = styled.button`
    width: 15px;
    display: flex;
    align-items: center;
    justify-content: center;
    background: #ececec;
`;
const Tab = styled.button`
    flex: 0 1 139px;
    display: flex;
    align-items: center;
    justify-content: center;
    gap: 2px;
    border-right: 1px solid ${({ $active }) => $active ? "transparent" : "#aaa"};
    background: ${({ $active }) => $active ? "#fff" : "none"};
`;
const TabView = styled.button`
    width: 24px;
    margin-left: auto;
    display: flex;
    align-items: center;
    justify-content: center;
    gap: 4px;
    background: #f6f6f6;
`;
const Canvas = styled.div`
    position: relative;
    flex: 1;
    min-height: 0;
    background: #fff;
`;
const Plan = styled.svg`
    display: block;
    width: 100%;
`;
const Palette = styled.div`
    position: absolute;
    left: 1px;
    top: 35px;
    height: 16px;
    display: flex;
    align-items: center;
    background: #ececec;
    padding-right: 1px;
`;
const PaletteGrip = styled.span`
    align-self: stretch;
    width: 8px;
    margin-right: 1px;
    padding: 2px;
    background: #f4f4f4;
    border-right: 1px solid #ccc;

    i {
        display: block;
        width: 4px;
        height: 4px;
        border-radius: 50%;
        background: #d6d6d6;
    }
`;
const sides = {
    top: "top: 1px; left: calc(50% - 7px);",
    bottom: "bottom: 1px; left: calc(50% - 7px);",
    left: "left: 1px; top: calc(50% - 7px);",
    right: "right: 1px; top: calc(50% - 7px);",
};
const Handle = styled.span`
    position: absolute;
    ${({ $side }) => sides[$side]}
    width: ${({ $side }) => $side === "top" || $side === "bottom" ? 14 : 6}px;
    height: ${({ $side }) => $side === "top" || $side === "bottom" ? 6 : 14}px;
    display: flex;
    align-items: center;
    justify-content: center;
    border-radius: 1px;
    background: #f4f2f0;

    &::after {
        content: "";
        width: ${({ $side }) => $side === "top" || $side === "bottom" ? 11 : 1}px;
        height: ${({ $side }) => $side === "top" || $side === "bottom" ? 1 : 11}px;
        background: repeating-linear-gradient(${({ $side }) => $side === "top" || $side === "bottom" ? "90deg" : "180deg"}, #f7c9a3 0 2px, transparent 2px 3px);
    }
`;
const Status = styled.div`
    height: 9px;
    display: flex;
    border-bottom: 1px solid #dedede;
`;
const Zooms = styled.div`
    width: 34px;
    display: flex;
    align-items: center;
    justify-content: space-evenly;
`;
const StatusItem = styled.button`
    flex: 1 1 0;
    min-width: 0;
    display: flex;
    align-items: center;
    padding: 0 2px 0 1px;
    border-left: 1px solid #dcdcdc;
    white-space: nowrap;

    span {
        flex: 1;
        text-align: center;
    }
`;
const Panel = styled.aside`
    display: flex;
    flex-direction: column;
    border-left: 1px solid #dcdcdc;
`;
const PanelTop = styled.div`
    height: 22px;
`;
const PanelTools = styled.div`
    display: flex;
    align-items: center;
    gap: 1px;
`;
const NavButton = styled.button`
    width: 13px;
    height: 14px;
    display: flex;
    align-items: center;
    justify-content: center;
    border-radius: 2px;
    background: ${({ $on }) => $on ? "#c3c3c6" : "none"};
`;
const PanelMenu = styled.button`
    width: 16px;
    height: 10px;
    margin-left: auto;
    display: flex;
    align-items: center;
    justify-content: center;
    gap: 2px;
    border-radius: 2px;
    background: #fff;
`;
const SearchField = styled.input`
    height: 9px;
    padding: 0 1px;
    background: #fff;
    border: 1px solid #ddd;

    &::placeholder {
        color: #c4c4c4;
        opacity: 1;
    }
`;
const Tree = styled.ul`
    flex: 1;
    padding-top: 1px;
    background: #fff;
`;
const TreeRow = styled.li`
    height: 11px;
    display: flex;
    align-items: center;
    gap: 1px;
    padding-left: ${({ $depth }) => $depth * 6}px;
    font-weight: ${({ $active }) => $active ? 700 : 500};
    background: ${({ $active }) => $active ? "#dcdcdc" : "none"};
    white-space: nowrap;
`;
const Arrow = styled.span`
    width: 6px;
    display: flex;
    justify-content: center;
`;
const Track = styled.div`
    height: 8px;
    padding: 2px 8px 2px 1px;
    background: #fafafa;
    border-bottom: 1px solid #e2e2e2;
`;
const Thumb = styled.div`
    height: 3px;
    border-radius: 2px;
    background: #bdbdbd;
`;
const Actions = styled.div`
    height: 15px;
    display: flex;
    align-items: center;
    padding-left: 1px;
`;
const PropTitle = styled(GroupTitle)`
    height: 10px;
    margin: 0 0 1px;
`;
const PropRow = styled.div`
    height: 10px;
    display: flex;
    align-items: center;
    gap: 2px;
`;
const PropLabel = styled.label`
    flex: 1;
`;
const PropField = styled.input`
    width: 84px;
    height: 8px;
    padding: 0 2px;
    background: #fff;
`;
const Settings = styled.button`
    height: 10px;
    margin: 1px;
    border-radius: 2px;
    background: #fff;
`;
const Footer = styled.footer`
    height: 11px;
    display: flex;
    align-items: center;
    justify-content: flex-end;
    gap: 4px;
    padding-right: 5px;
`;
const FooterLine = styled.span`
    width: 1px;
    height: 7px;
    background: #ccc;
`;
const Brand = styled.span`
    font-size: 6px;
    font-weight: 600;

    b {
        font-weight: 300;
    }
`;
const DialogWindow = styled.section`
    position: absolute;
    display: flex;
    flex-direction: column;
    border-radius: 5px;
    font-size: 6px;
    line-height: 8px;
    overflow: hidden;
    box-shadow: 0 0 1px rgba(0, 0, 0, 0.5), 0 8px 18px rgba(0, 0, 0, 0.35);
`;
const ReportWindow = styled(DialogWindow)`
    left: 336px;
    top: 157px;
    width: 135px;
    background: #ececec;
`;
const SaveWindow = styled(DialogWindow)`
    left: 406px;
    top: 275px;
    width: 163px;
    background: #fff;
`;
const DialogTitle = styled.div`
    height: 14px;
    display: flex;
    align-items: center;
    gap: 5px;
    padding-left: 3px;
    font-weight: 600;
    background: #f6f6f6;
    border-bottom: 1px solid #e0e0e0;
`;
const ReportBox = styled.div`
    margin: 2px 4px 0 3px;
    padding: 1px 7px 0 1px;
    background: #f6f6f6;
`;
const ReportText = styled.textarea`
    display: block;
    width: 100%;
    height: 61px;
    resize: none;
    overflow: hidden;
    white-space: pre;
    tab-size: 13px;
    font-size: 5px;
    font-weight: 500;
    line-height: 6px;
    color: #222;
    background: linear-gradient(#d7d7d7 54px, #fff 54px);
    border-bottom: 1px solid #e2e2e2;
`;
const ReportTrack = styled.div`
    padding: 2px 14px 2px 2px;
`;
const ReportActions = styled.div`
    display: flex;
    justify-content: flex-end;
    gap: 4px;
    margin-top: 2px;
    padding: 2px 5px 4px;
    border-top: 1px solid #dadada;
`;
const DialogButton = styled.button`
    width: 38px;
    height: 10px;
    border-radius: 2px;
    color: ${({ $primary }) => $primary ? "#fff" : "#222"};
    background: ${({ $primary, $soft }) => $primary ? "#1283ff" : $soft ? "#f0f0f0" : "#fff"};
    box-shadow: 0 0 1px rgba(0, 0, 0, 0.4);
`;
const SaveTitle = styled.div`
    height: 13px;
    line-height: 13px;
    text-align: center;
    font-weight: 600;
    background: #f7f7f7;
    border-bottom: 1px solid #ebebeb;
`;
const SaveForm = styled.div`
    display: grid;
    grid-template-columns: 42px 1fr;
    align-items: center;
    gap: 5px 4px;
    padding: 5px 9px 9px 0;
`;
const SaveLabel = styled.label`
    font-size: 5px;
    color: #8a8a8a;
    text-align: right;
`;
const DialogField = styled.input`
    width: 100%;
    height: 10px;
    padding: 0 4px;
    border-radius: 2px;
    background: #fff;
    box-shadow: 0 0 1px rgba(0, 0, 0, 0.4);
`;
const NameField = styled(DialogField)`
    box-shadow: 0 0 0 1px #5b93f5;

    &::selection {
        background: #b3d7ff;
    }
`;
const WhereRow = styled.div`
    display: flex;
    gap: 4px;
    margin-top: 4px;
`;
const DialogSelect = styled.div`
    flex: 1;
    min-width: 0;
    height: 10px;
    display: flex;
    align-items: center;
    gap: 2px;
    padding: 0 2px 0 4px;
    border-radius: 2px;
    background: #fff;
    box-shadow: 0 0 1px rgba(0, 0, 0, 0.3);
`;
const Stepper = styled.span`
    width: 7px;
    height: 7px;
    display: flex;
    align-items: center;
    justify-content: center;
    border-radius: 2px;
    background: #1a7cf7;
`;
const Expand = styled.button`
    width: 9px;
    height: 10px;
    display: flex;
    align-items: center;
    justify-content: center;
    border-radius: 2px;
    box-shadow: 0 0 1px rgba(0, 0, 0, 0.4);
`;
const FormatRow = styled.div`
    height: 18px;
    display: flex;
    align-items: center;
    gap: 4px;
    padding: 0 16px 0 3px;
    border-top: 1px solid #e4e4e4;
    border-bottom: 1px solid #e4e4e4;
`;
const SaveActions = styled.div`
    display: flex;
    justify-content: flex-end;
    gap: 4px;
    padding: 9px;
`;
